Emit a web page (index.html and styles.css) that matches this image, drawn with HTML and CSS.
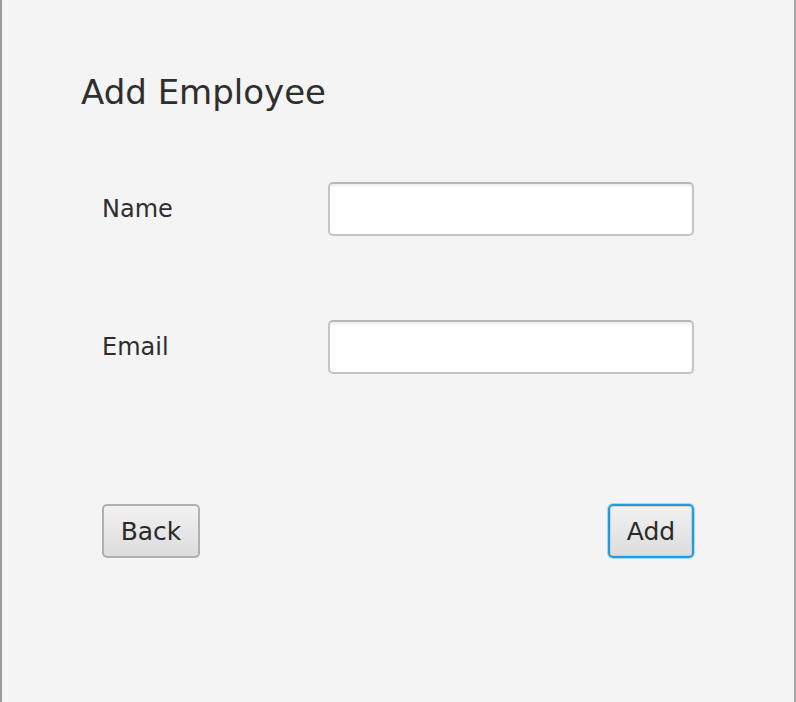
FILE: index.html
```html
<!DOCTYPE html>
<html>
<head>
<meta charset="utf-8">
<link rel="stylesheet" href="styles.css">
</head>
<body>
<div class="window">
  <h1 class="title">Add Employee</h1>
  <div class="form">
    <div class="row">
      <label class="label">Name</label>
      <input class="field" type="text">
    </div>
    <div class="row">
      <label class="label">Email</label>
      <input class="field" type="text">
    </div>
  </div>
  <div class="actions">
    <button class="btn back">Back</button>
    <button class="btn add focused">Add</button>
  </div>
</div>
</body>
</html>
```
FILE: styles.css
```css
html, body {
  margin: 0;
  padding: 0;
  background: #f4f4f4;
}
.window {
  box-sizing: border-box;
  width: 796px;
  height: 702px;
  background: #f4f4f4;
  border-left: 2px solid #9c9c9c;
  border-right: 2px solid #a8a8a8;
  font-family: "DejaVu Sans", sans-serif;
  color: #333333;
  padding-top: 71px;
}
.title {
  margin: 0 0 0 79px;
  font-size: 34px;
  font-weight: normal;
  line-height: 42px;
  color: #2e2e2e;
}
.form {
  margin-top: 69px;
  margin-left: 100px;
  display: flex;
  flex-direction: column;
  gap: 84px;
}
.row {
  display: flex;
  align-items: center;
}
.label {
  width: 226px;
  font-size: 24px;
  color: #2e2e2e;
}
.field {
  box-sizing: border-box;
  width: 366px;
  height: 54px;
  margin: 0;
  border: 2px solid #c4c4c4;
  border-top-color: #b8b8b8;
  border-radius: 5px;
  background: #ffffff;
  box-shadow: inset 0 3px 3px -1px #ececec;
  outline: none;
}
.actions {
  margin-top: 130px;
  margin-left: 100px;
  width: 592px;
  display: flex;
  justify-content: space-between;
  align-items: center;
}
.btn {
  box-sizing: border-box;
  height: 54px;
  padding: 0;
  font-family: "DejaVu Sans", sans-serif;
  font-size: 25px;
  color: #2a2a2a;
  border: 2px solid #b0b0b0;
  border-radius: 5px;
  background: linear-gradient(#f2f2f2, #dcdcdc);
  margin: 0;
}
.btn.back {
  width: 98px;
}
.btn.add {
  width: 86px;
}
.btn.focused {
  border: 2px solid #1f9ce0;
  box-shadow: 0 0 0 1px #a8d8f2, inset 0 0 0 1px #d0d0d0;
}
```
